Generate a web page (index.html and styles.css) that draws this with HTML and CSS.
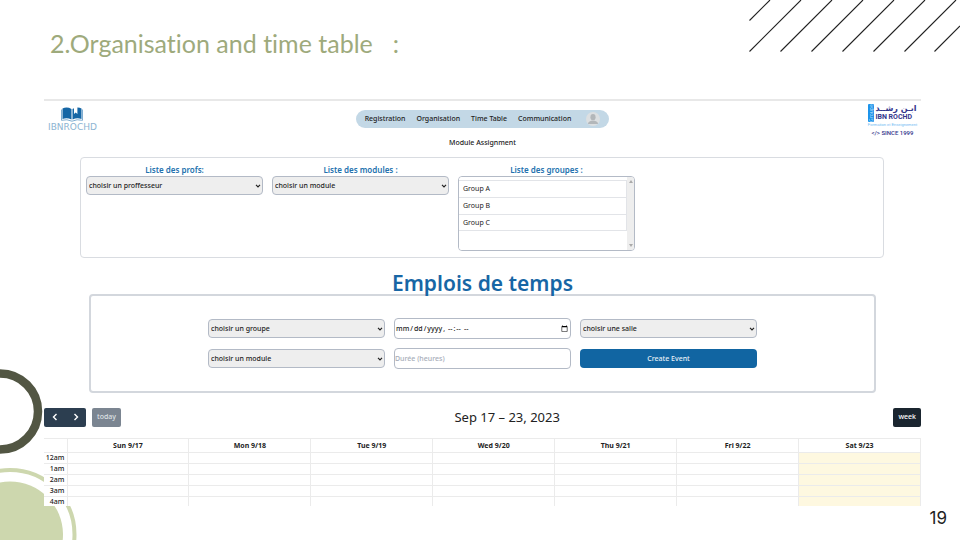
FILE: index.html
```html
<!DOCTYPE html>
<html lang="fr">
<head>
<meta charset="utf-8">
<meta name="viewport" content="width=device-width, initial-scale=1">
<title>Organisation and time table</title>
<link rel="stylesheet" href="styles.css">
</head>
<body>
<div class="slide">
  <svg class="deco deco-lines" width="211" height="53" viewBox="0 0 211 53" aria-hidden="true">
    <path d="M.5 20.500 21 0M.5 51.500 52 0M31.500 51.500 83 0M62.500 51.500 114 0M93.500 51.500 145 0M124.500 51.500 176 0M155.500 51.500 207 0M185.500 51.500 211 26" fill="none" stroke="#222" stroke-width="1.100"/>
  </svg>
  <svg class="deco deco-circles" width="80" height="180" viewBox="0 0 80 180" aria-hidden="true">
    <circle cx="0" cy="51.500" r="38" fill="none" stroke="#525643" stroke-width="8.500"/>
    <circle cx="10" cy="174.500" r="53" fill="#cdd7ae"/>
    <circle cx="10" cy="174.500" r="64.500" fill="none" stroke="#cdd7ae" stroke-width="4"/>
  </svg>

  <h1 class="slide-title"><span>2.Organisation and time table</span><span>:</span></h1>

  <main class="app">
    <header class="topbar">
      <a class="brand" href="#">
        <svg width="22" height="15" viewBox="0 0 22 15" aria-hidden="true">
          <path d="M1.500 1.500Q6-.5 10.500 2V12.500Q6 10.500 1.500 12Z" fill="#1566a5"/>
          <path d="M11.500 2 13 1.200V7L14.700 5.500 16.400 7V.6Q18.500.5 20.500 1.500V12Q16 10.500 11.500 12.500Z" fill="#1566a5"/>
          <path d="M.5 2.500V13.300Q6 11.800 11 14.200 16 11.800 21.500 13.300V2.500" fill="none" stroke="#5e98c5" stroke-width=".8"/>
        </svg>
        <span>IBNROCHD</span>
      </a>
      <nav class="menu">
        <a href="#">Registration</a>
        <a href="#">Organisation</a>
        <a href="#">Time Table</a>
        <a href="#">Communication</a>
        <a class="avatar" href="#" aria-label="Profil">
          <svg width="14" height="14" viewBox="0 0 14 14" aria-hidden="true">
            <circle cx="7" cy="7" r="7" fill="#dcdfe1"/>
            <ellipse cx="7" cy="5.200" rx="2.600" ry="3.100" fill="#b3b7ba"/>
            <path d="M2 12Q2 9.500 5.500 8.800H8.500Q12 9.500 12 12Z" fill="#b3b7ba"/>
          </svg>
        </a>
      </nav>
      <div class="school">
        <div class="school-main">
          <span class="school-tag">Groupe</span>
          <div class="school-names">
            <span class="school-ar" lang="ar" dir="rtl">ابـن رشــد</span>
            <span class="school-fr">IBN ROCHD</span>
          </div>
        </div>
        <span class="school-motto">Formation et Enseignement</span>
        <span class="school-since">&lt;/&gt; SINCE 1999</span>
      </div>
    </header>

    <p class="caption">Module Assignment</p>

    <section class="assign">
      <div class="field">
        <label for="prof">Liste des profs:</label>
        <span class="pick"><select id="prof"><option>choisir un proffesseur</option></select><svg width="6" height="4" viewBox="0 0 6 4" aria-hidden="true"><path d="M1 .8 3 2.800 5 .8"/></svg></span>
      </div>
      <div class="field">
        <label for="module">Liste des modules :</label>
        <span class="pick"><select id="module"><option>choisir un module</option></select><svg width="6" height="4" viewBox="0 0 6 4" aria-hidden="true"><path d="M1 .8 3 2.800 5 .8"/></svg></span>
      </div>
      <div class="field">
        <label for="groups">Liste des groupes :</label>
        <div class="listbox">
          <select id="groups" multiple size="3"><option>Group A</option><option>Group B</option><option>Group C</option></select>
          <span class="track" aria-hidden="true">
            <svg width="4" height="3" viewBox="0 0 4 3"><path d="M0 3 2 0 4 3Z"/></svg>
            <svg width="4" height="3" viewBox="0 0 4 3"><path d="M0 0 2 3 4 0Z"/></svg>
          </span>
        </div>
      </div>
    </section>

    <h2 class="heading">Emplois de temps</h2>

    <form class="planner">
      <span class="pick"><select aria-label="Groupe"><option>choisir un groupe</option></select><svg width="6" height="4" viewBox="0 0 6 4" aria-hidden="true"><path d="M1 .8 3 2.800 5 .8"/></svg></span>
      <input type="datetime-local" aria-label="Date">
      <span class="pick"><select aria-label="Salle"><option>choisir une salle</option></select><svg width="6" height="4" viewBox="0 0 6 4" aria-hidden="true"><path d="M1 .8 3 2.800 5 .8"/></svg></span>
      <span class="pick"><select aria-label="Module"><option>choisir un module</option></select><svg width="6" height="4" viewBox="0 0 6 4" aria-hidden="true"><path d="M1 .8 3 2.800 5 .8"/></svg></span>
      <input type="text" placeholder="Durée (heures)" aria-label="Durée (heures)">
      <button type="button">Create Event</button>
    </form>

    <div class="toolbar">
      <div class="tools">
        <div class="arrows">
          <button type="button" aria-label="Précédent"><svg width="6" height="8" viewBox="0 0 6 8" aria-hidden="true"><path d="M4.500 1 1.500 4 4.500 7"/></svg></button>
          <button type="button" aria-label="Suivant"><svg width="6" height="8" viewBox="0 0 6 8" aria-hidden="true"><path d="M1.500 1 4.500 4 1.500 7"/></svg></button>
        </div>
        <button class="today" type="button" disabled>today</button>
      </div>
      <h3>Sep 17 – 23, 2023</h3>
      <button class="week" type="button">week</button>
    </div>

    <div class="calendar">
      <table>
        <thead>
          <tr><th class="hours"></th><th>Sun 9/17</th><th>Mon 9/18</th><th>Tue 9/19</th><th>Wed 9/20</th><th>Thu 9/21</th><th>Fri 9/22</th><th>Sat 9/23</th></tr>
        </thead>
        <tbody>
          <tr><th>12am</th><td></td><td></td><td></td><td></td><td></td><td></td><td class="now"></td></tr>
          <tr><th>1am</th><td></td><td></td><td></td><td></td><td></td><td></td><td class="now"></td></tr>
          <tr><th>2am</th><td></td><td></td><td></td><td></td><td></td><td></td><td class="now"></td></tr>
          <tr><th>3am</th><td></td><td></td><td></td><td></td><td></td><td></td><td class="now"></td></tr>
          <tr><th>4am</th><td></td><td></td><td></td><td></td><td></td><td></td><td class="now"></td></tr>
        </tbody>
      </table>
    </div>
  </main>

  <footer class="page-number">19</footer>
</div>
</body>
</html>
```

FILE: styles.css
```css
* { box-sizing: border-box; }

body {
  margin: 0;
  background: #fff;
  color: #222;
  font: 500 7px/10px "Noto Sans", "Open Sans", sans-serif;
}

h1, h2, h3, p { margin: 0; }
a { color: inherit; text-decoration: none; }
svg { display: block; }
button, input, select { font: inherit; color: inherit; margin: 0; }

.slide {
  position: relative;
  display: flex;
  flex-direction: column;
  height: 100vh;
  overflow: hidden;
}

.deco { position: absolute; }
.deco-lines { top: 0; right: 0; }
.deco-circles { bottom: 0; left: 0; }

.slide-title {
  display: flex;
  gap: 20px;
  padding: 28px 50px 41px;
  color: #9eaa7c;
  font: 400 25px/30px Lato, sans-serif;
  font-variant-ligatures: none;
}

.app {
  position: relative;
  display: flex;
  flex: 1;
  flex-direction: column;
  min-height: 0;
  margin: 0 39px 0 44px;
  overflow: hidden;
  border-top: 2px solid #e8e8e8;
  background: #fff;
}

.topbar {
  display: grid;
  grid-template-columns: 1fr auto 1fr;
  align-items: start;
  height: 37px;
  padding: 2px 4px 0;
}

.brand {
  display: flex;
  flex-direction: column;
  align-items: center;
  justify-self: start;
  padding-top: 4px;
  color: #8db4d2;
  font: 400 9px/10px "DejaVu Sans", sans-serif;
}

.menu {
  display: flex;
  align-items: center;
  gap: 11px;
  height: 18px;
  margin-top: 7px;
  padding: 0 9px;
  border-radius: 9px;
  background: #c3d8e6;
}

.avatar { margin: 0 0 0 4px; }

.school {
  display: flex;
  flex-direction: column;
  align-items: center;
  justify-self: end;
  padding-top: 1px;
  color: #34368c;
}

.school-main { display: flex; gap: 1px; }

.school-tag {
  width: 6px;
  border-radius: 1px;
  background: #1d93ea;
  color: #a9d6f8;
  font-size: 5px;
  line-height: 6px;
  text-align: center;
  writing-mode: vertical-rl;
  transform: rotate(180deg);
}

.school-names { display: flex; flex-direction: column; }
.school-ar { font: 700 8px/9px "DejaVu Sans", sans-serif; }
.school-fr { font: 700 7px/9px Roboto, sans-serif; }
.school-motto { color: #6db9f2; font: 400 4px/6px "Liberation Sans", sans-serif; }
.school-since { font: 500 6px/9px Roboto, sans-serif; }

.caption { text-align: center; }

.assign {
  display: grid;
  grid-template-columns: repeat(3, minmax(0, 177px));
  gap: 9px;
  min-height: 101px;
  margin: 9px 37px 0 36px;
  padding: 7px 5px 5px;
  border: 1px solid #d9dce1;
  border-radius: 4px;
}

.field label {
  display: block;
  padding-bottom: 1px;
  color: #2371ae;
  font-weight: 600;
  font-size: 8px;
  text-align: center;
}

.pick { position: relative; display: block; }

.pick select {
  display: block;
  width: 100%;
  height: 19px;
  padding: 0 2px;
  border: 1px solid #b3bac6;
  border-radius: 4px;
  background: #eee;
  appearance: none;
}

.pick svg {
  position: absolute;
  top: 8px;
  right: 2px;
  fill: none;
  stroke: #222;
  stroke-width: 1.2;
  pointer-events: none;
}

.listbox {
  display: flex;
  height: 75px;
  overflow: hidden;
  border: 1px solid #b3bac6;
  border-radius: 4px;
}

.listbox select {
  flex: 1;
  height: 100%;
  padding: 3px 0 0;
  overflow: hidden;
  border: 0;
  background: #fff;
  outline: 0;
}

.listbox option {
  min-height: 17px;
  padding: 3px 4px;
  border: 1px solid #e2e4e8;
  border-width: 1px 1px 0 0;
}

.listbox option:last-child { border-bottom-width: 1px; }

.track {
  display: flex;
  flex-direction: column;
  justify-content: space-between;
  align-items: center;
  width: 7px;
  padding: 3px 0;
  background: #eee;
}

.track svg { fill: #aaa; }

.heading {
  z-index: 1;
  margin-top: 12px;
  color: #1766a5;
  font-size: 21px;
  font-weight: 600;
  line-height: 26px;
  text-align: center;
}

.planner {
  display: grid;
  grid-template-columns: repeat(3, 177px);
  grid-auto-rows: 21px;
  justify-content: center;
  align-items: center;
  align-content: start;
  gap: 9px;
  min-height: 99px;
  margin: -2px 45px 0;
  padding: 22px 0;
  border: 2px solid #d3d7dd;
  border-radius: 4px;
}

.planner input {
  width: 100%;
  height: 21px;
  padding: 0;
  border: 1px solid #b3bac6;
  border-radius: 4px;
  background: #fff;
}

.planner input::placeholder { color: #a6acb8; }
.planner input::-webkit-datetime-edit { padding: 0; }
.planner input::-webkit-datetime-edit-fields-wrapper { padding: 0; }

.planner button {
  height: 19px;
  border: 0;
  border-radius: 4px;
  background: #1165a2;
  color: #e6f0f7;
}

.toolbar {
  display: flex;
  justify-content: space-between;
  align-items: center;
  margin: 14px 0 11px;
}

.tools, .arrows { display: flex; }
.tools { gap: 6px; }

.toolbar button {
  display: flex;
  align-items: center;
  justify-content: center;
  height: 19px;
  padding: 0 5px;
  border: 0;
  border-radius: 2px;
  background: #2c3e50;
  color: #fff;
}

.arrows { overflow: hidden; border-radius: 2px; }
.toolbar .arrows button { width: 21px; border-radius: 0; }
.arrows svg { fill: none; stroke: #fff; stroke-width: 1.4; }
.toolbar .today { background: #7b8591; color: #dfe2e5; }
.toolbar .week { background: #1a252f; }

.toolbar h3 {
  font-size: 13px;
  font-weight: 400;
  line-height: 20px;
}

.calendar { flex: 1; min-height: 0; overflow: hidden; }

.calendar table {
  width: 100%;
  border-collapse: collapse;
  table-layout: fixed;
}

.calendar th, .calendar td {
  height: 11px;
  padding: 0;
  border: 1px solid #ebebeb;
}

.calendar tr > :first-child { border-left: 0; }
.calendar thead th { height: 14px; font-weight: 700; }
.calendar .hours { width: 23px; }
.calendar tbody th { padding-right: 2px; font-weight: 500; text-align: right; }
.calendar .now { background: #fef8e0; }

.page-number {
  height: 34px;
  padding-right: 13px;
  font: 400 17px/24px Inter, sans-serif;
  text-align: right;
}
```
